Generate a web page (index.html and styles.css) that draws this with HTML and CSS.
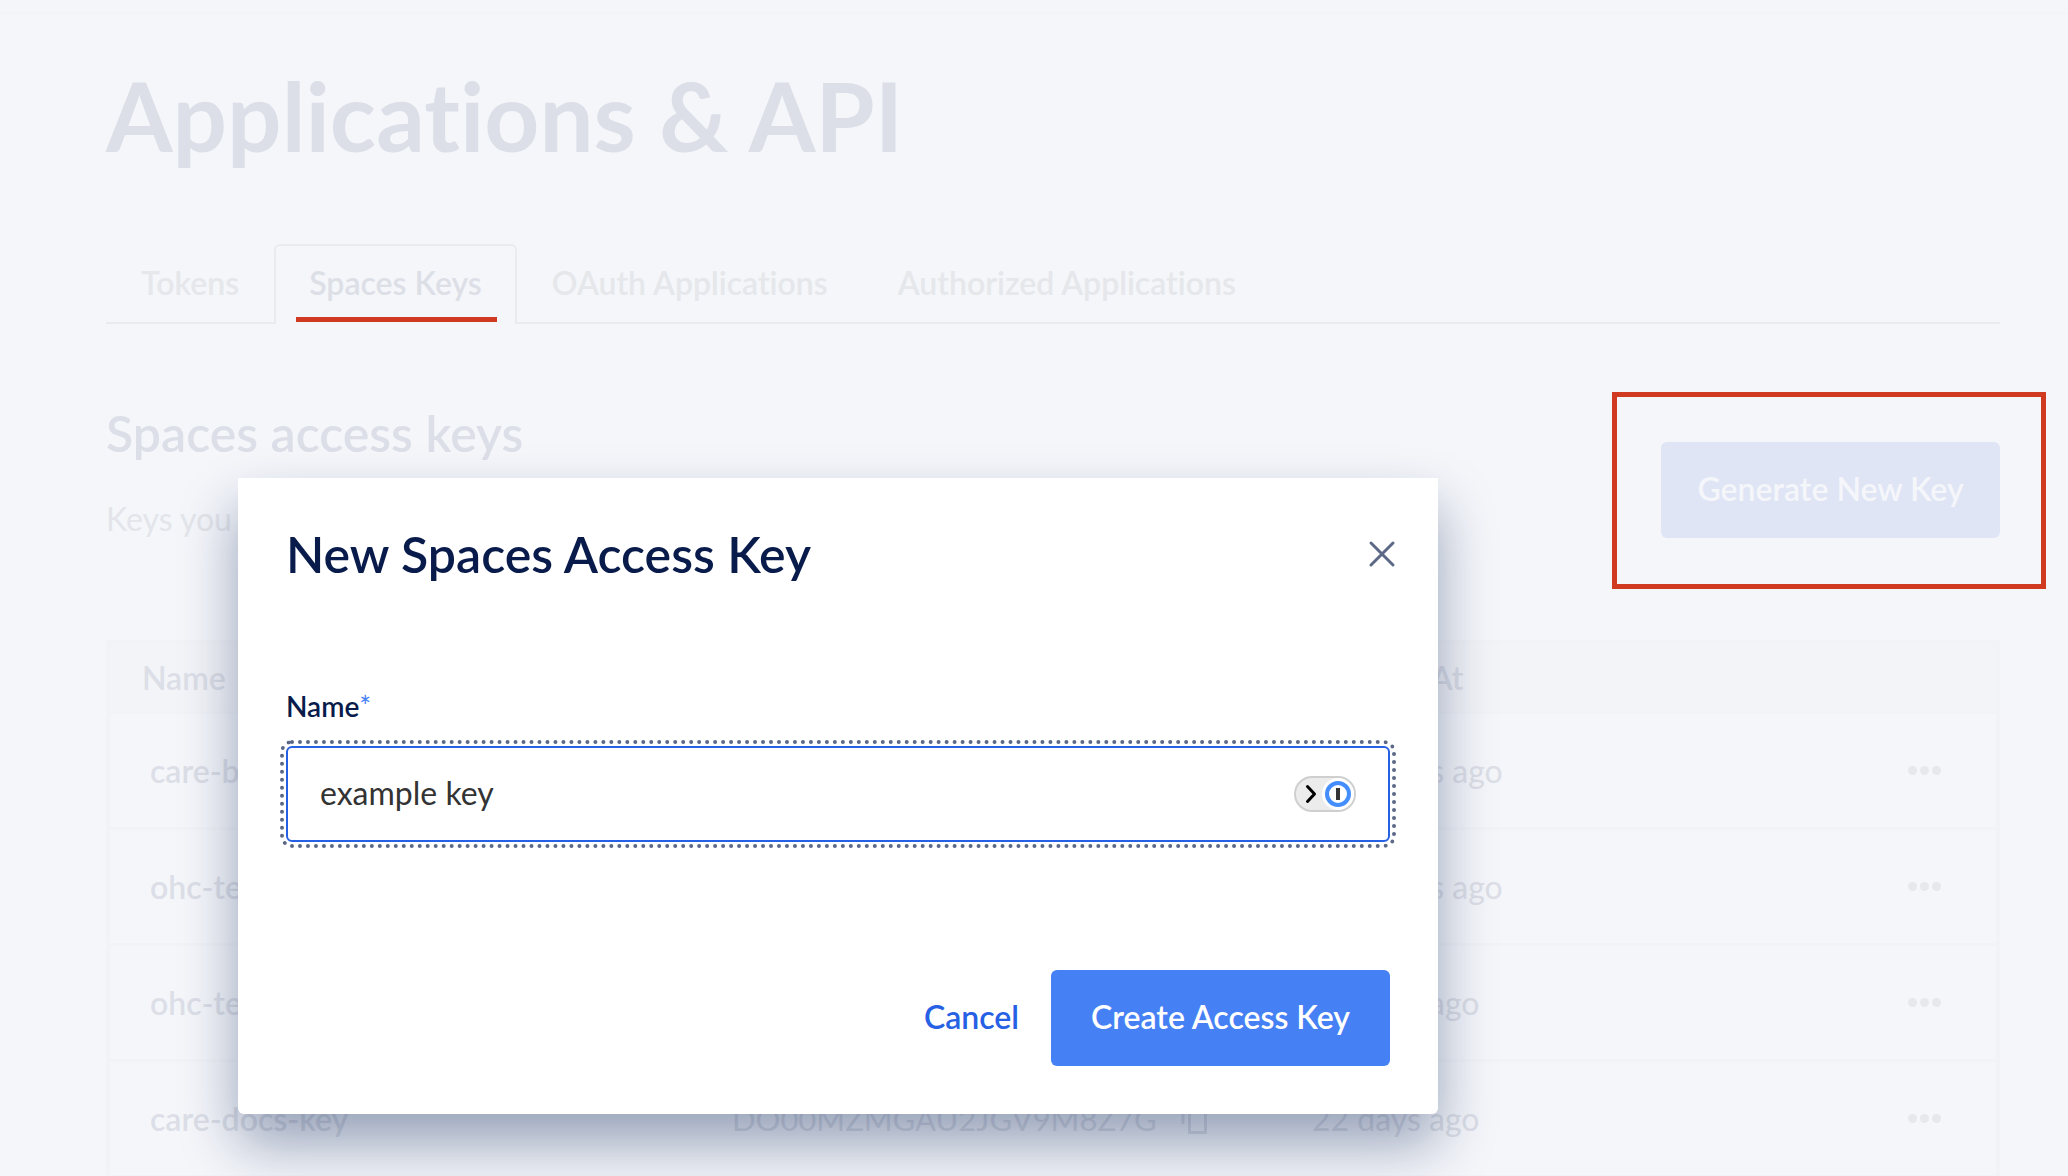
FILE: index.html
```html
<!DOCTYPE html>
<html lang="en">
<head>
<meta charset="utf-8">
<title>Applications &amp; API</title>
<link rel="stylesheet" href="styles.css">
</head>
<body>
<header class="topbar"></header>
<main class="page">
  <h1 class="page-title">Applications &amp; API</h1>
  <nav class="tabs">
    <a class="tab" href="#tokens">Tokens</a>
    <a class="tab tab-active" href="#spaces">Spaces Keys</a>
    <a class="tab" href="#oauth">OAuth Applications</a>
    <a class="tab" href="#authorized">Authorized Applications</a>
  </nav>
  <section class="intro">
    <div>
      <h2 class="section-title">Spaces access keys</h2>
      <p class="section-text">Keys you</p>
    </div>
    <div class="highlight"><button class="button button-faded" type="button">Generate New Key</button></div>
  </section>
  <table class="keys">
    <thead>
      <tr><th class="col-name">Name</th><th class="col-key"></th><th class="col-date">Created At</th><th></th></tr>
    </thead>
    <tbody>
      <tr><td class="name">care-b</td><td></td><td>2 months ago</td><td class="more"><button class="dots" type="button" aria-label="More"><i></i><i></i><i></i></button></td></tr>
      <tr><td class="name">ohc-te</td><td></td><td>2 months ago</td><td class="more"><button class="dots" type="button" aria-label="More"><i></i><i></i><i></i></button></td></tr>
      <tr><td class="name">ohc-te</td><td></td><td>21 days ago</td><td class="more"><button class="dots" type="button" aria-label="More"><i></i><i></i><i></i></button></td></tr>
      <tr><td class="name">care-docs-key</td><td><span class="key">DO00MZMGAU2JGV9M8Z7G
        <svg class="copy" viewBox="0 0 26 32" fill="none" stroke="currentColor" stroke-width="3"><path d="M2 21V2h16"/><path d="M8.500 8.500h16v21h-16z"/></svg></span></td><td>22 days ago</td><td class="more"><button class="dots" type="button" aria-label="More"><i></i><i></i><i></i></button></td></tr>
    </tbody>
  </table>
</main>

<form class="modal" role="dialog" aria-labelledby="modal-title">
  <div class="modal-head">
    <h2 class="modal-title" id="modal-title">New Spaces Access Key</h2>
    <button class="close" type="button" aria-label="Close">
      <svg viewBox="0 0 32 32" width="32" height="32" fill="none" stroke="currentColor" stroke-width="3" stroke-linecap="round"><path d="M5 5l22 22M27 5L5 27"/></svg>
    </button>
  </div>
  <label class="label" for="key-name">Name<span class="required">*</span></label>
  <div class="field">
    <input class="input" id="key-name" type="text" value="example key">
    <svg class="pill" viewBox="0 0 62 36" width="62" height="36">
      <rect x="1" y="1" width="60" height="34" rx="17" fill="#ececec" stroke="#cfcfcf" stroke-width="2"/>
      <circle cx="44" cy="18" r="16" fill="#fff"/>
      <circle cx="44" cy="18" r="11" fill="none" stroke="#448dfc" stroke-width="4"/>
      <rect x="42" y="12" width="4" height="12" fill="#333"/>
      <path d="M13.500 10.500l7 7.500-7 7.500" fill="none" stroke="#000" stroke-width="3" stroke-linecap="round" stroke-linejoin="round"/>
    </svg>
  </div>
  <div class="actions">
    <button class="cancel" type="button">Cancel</button>
    <button class="button button-primary" type="submit">Create Access Key</button>
  </div>
</form>
</body>
</html>
```

FILE: styles.css
```css
* {
  box-sizing: border-box;
}

body {
  position: relative;
  margin: 0;
  min-height: 100vh;
  overflow: hidden;
  background: #f4f6fa;
  color: #dcdfe7;
  font: 400 32px/40px Lato, "Open Sans", sans-serif;
  font-variant-ligatures: none;
}

button,
input {
  font: inherit;
}

h1,
h2,
p {
  margin: 0;
}

.topbar {
  height: 14px;
  border-bottom: 2px solid #f2f4f8;
}

.page {
  padding: 0 68px 0 106px;
}

.page-title {
  padding: 48px 0 76px;
  font-size: 96px;
  line-height: 106px;
  font-weight: 700;
}

.tabs {
  display: flex;
  height: 80px;
  border-bottom: 2px solid #e9ebee;
}

.tab {
  height: 80px;
  padding: 17px 33px;
  border: 2px solid transparent;
  border-bottom: 0;
  color: #e6e7eb;
  font-weight: 600;
  text-decoration: none;
}

.tab-active {
  position: relative;
  border-color: #e9ebee;
  border-radius: 6px 6px 0 0;
  background: #f4f6fa;
  color: #dddfe7;
}

.tab-active::after {
  content: "";
  position: absolute;
  right: 18px;
  bottom: 2px;
  left: 20px;
  height: 5px;
  background: #d03a20;
}

.intro {
  display: flex;
  justify-content: space-between;
  padding-top: 68px;
}

.section-title {
  padding-top: 11px;
  font-size: 50px;
  line-height: 60px;
  font-weight: 600;
}

.section-text {
  padding-top: 36px;
  color: #e3e5ea;
}

.highlight {
  margin-right: -46px;
  padding: 45px 41px 46px 44px;
  border: 5px solid #d03a20;
}

.button {
  width: 339px;
  height: 96px;
  padding: 0 0 2px;
  border: 0;
  border-radius: 6px;
  font-weight: 600;
}

.button-faded {
  display: block;
  background: #e0e5f5;
  color: #f4f6fa;
}

.keys {
  width: 100%;
  margin-top: 51px;
  border: 4px solid #f2f3f7;
  border-collapse: separate;
  border-spacing: 0;
  table-layout: fixed;
}

.keys th {
  height: 70px;
  padding: 0;
  border-bottom: 3px solid #f1f3f7;
  background: #f3f4f8;
  font-weight: 600;
  text-align: left;
}

.keys .col-name {
  width: 622px;
  padding-left: 32px;
}

.keys .col-key {
  width: 580px;
}

.keys .col-date {
  width: 420px;
}

.keys td {
  height: 116px;
  padding: 0;
  border-bottom: 3px solid #f1f3f7;
  white-space: nowrap;
}

.keys .name {
  padding-left: 40px;
  font-weight: 600;
}

.keys .more {
  padding-right: 55px;
}

.key {
  display: flex;
  align-items: center;
  gap: 24px;
  font-size: 31px;
}

.copy {
  width: 26px;
  height: 32px;
}

.dots {
  display: flex;
  gap: 3px;
  margin-left: auto;
  padding: 0;
  border: 0;
  background: none;
}

.dots i {
  width: 9px;
  height: 9px;
  border-radius: 50%;
  background: #e6e8ec;
}

.modal {
  position: absolute;
  top: 478px;
  left: 238px;
  width: 1200px;
  padding: 46px 48px 48px;
  border-radius: 0 0 6px 6px;
  background: #fff;
  box-shadow: 0 30px 56px rgba(3, 27, 78, 0.38);
  color: #081b4b;
}

.modal-head {
  display: flex;
  align-items: center;
  justify-content: space-between;
}

.modal-title {
  font-size: 50px;
  line-height: 60px;
  font-weight: 600;
}

.close {
  display: flex;
  margin-right: -8px;
  padding: 0;
  border: 0;
  background: none;
  color: #5b6987;
}

.label {
  display: block;
  margin-top: 104px;
  font-size: 28px;
  line-height: 36px;
  font-weight: 600;
}

.required {
  color: #4580f5;
  font-weight: 400;
}

.field {
  display: flex;
  align-items: center;
  margin-top: 22px;
  padding: 0 32px;
  height: 96px;
  border: 2px solid #2660e4;
  border-radius: 6px;
  outline: 4px dotted #5b6987;
  outline-offset: 2px;
}

.input {
  flex: 1;
  min-width: 0;
  padding: 0 0 2px;
  border: 0;
  outline: 0;
  background: none;
  color: #333;
}

.actions {
  display: flex;
  justify-content: flex-end;
  gap: 32px;
  margin-top: 128px;
}

.cancel {
  padding: 0 0 2px;
  border: 0;
  background: none;
  color: #2660e4;
  font-weight: 600;
}

.button-primary {
  background: #4580f5;
  color: #fff;
}
```
